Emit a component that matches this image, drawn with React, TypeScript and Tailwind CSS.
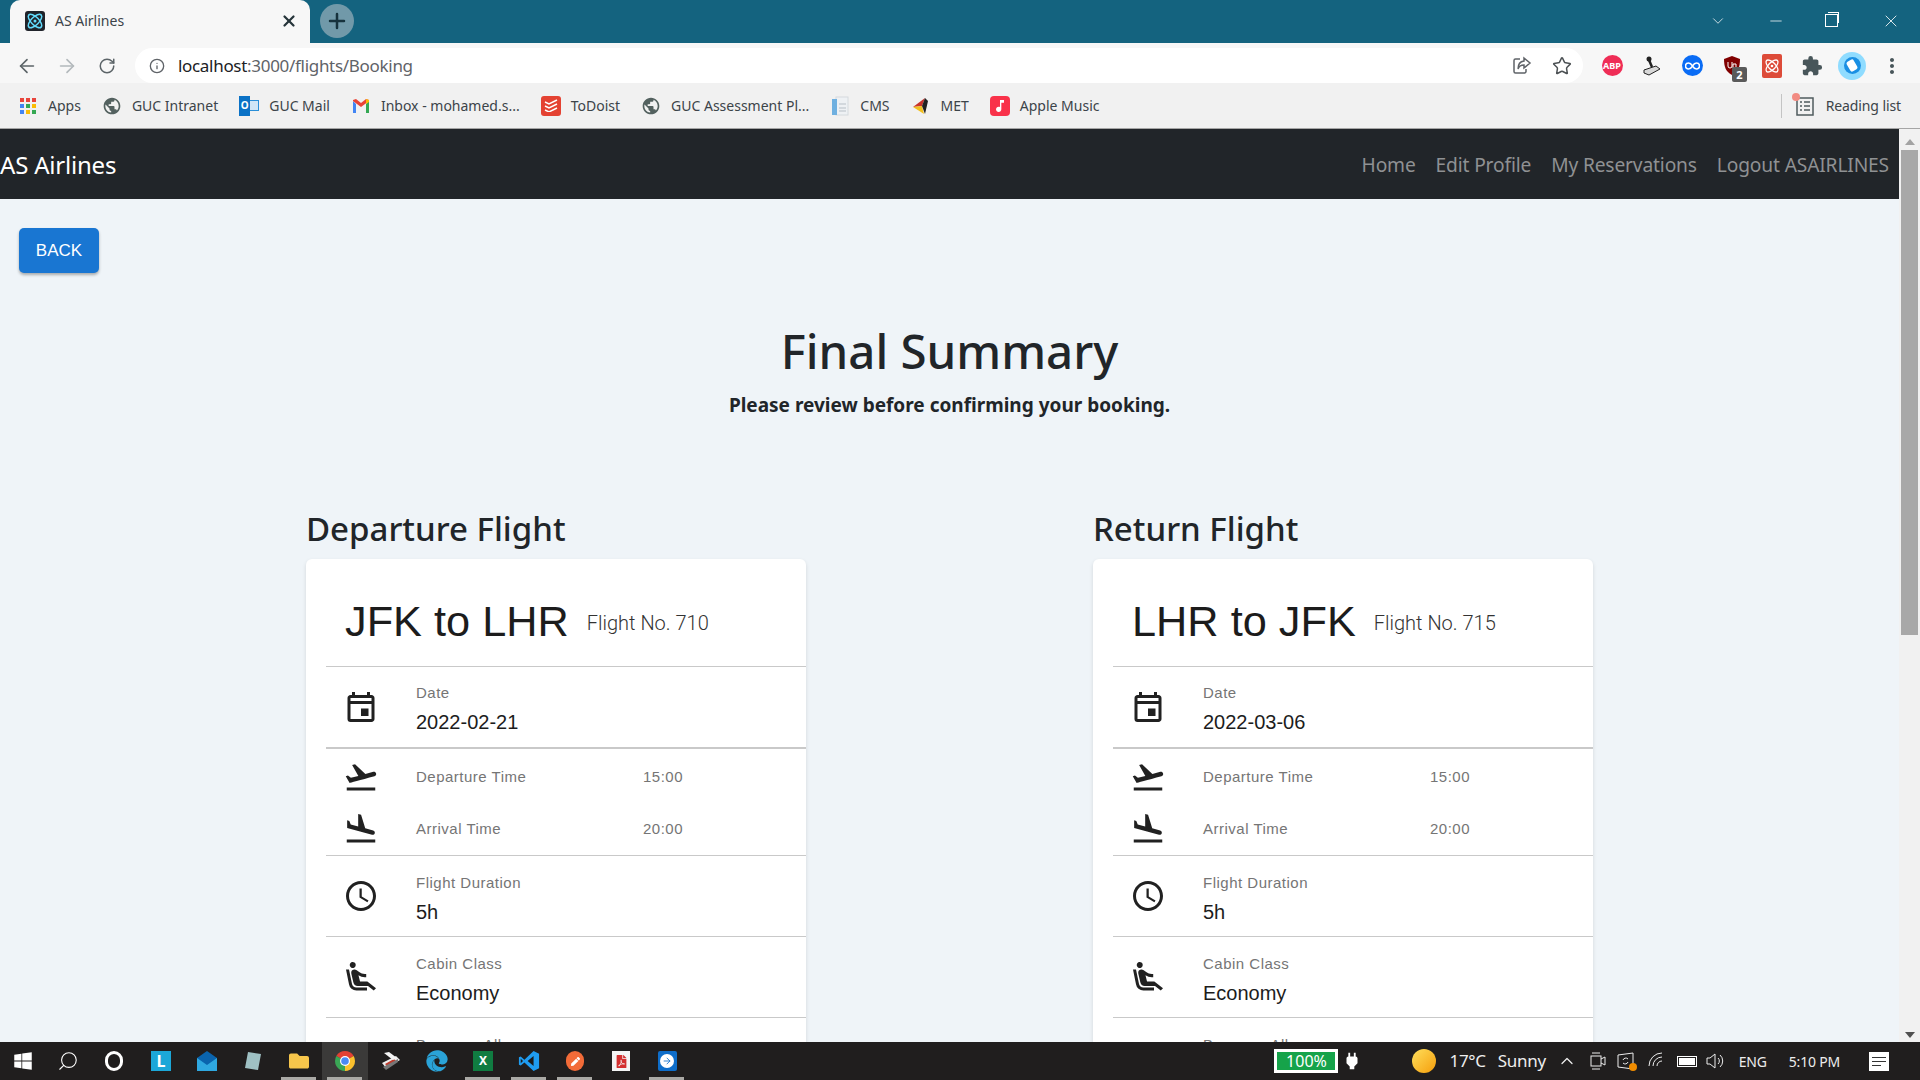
import React from 'react';
import { ArrowLeft, ArrowRight, RotateCw, Info, Star, Atom, Plus, X, ChevronDown, Minus, ChevronUp, Search } from 'lucide-react';
import {
  MdOutlineEvent,
  MdFlightTakeoff,
  MdFlightLand,
  MdAccessTime,
  MdAirlineSeatReclineExtra,
  MdExtension,
  MdPublic,
  MdMoreVert,
  MdPower,
  MdMusicNote,
} from 'react-icons/md';
import { FaWindows, FaEdge, FaFolder, FaPen, FaFilePdf } from 'react-icons/fa';

const segoe = "font-['Noto_Sans',sans-serif]";
const arial = "font-['Liberation_Sans',Arial,sans-serif]";

const appColors = ['bg-[#e8453c]', 'bg-[#e8453c]', 'bg-[#e8453c]', 'bg-[#4285f4]', 'bg-[#34a853]', 'bg-[#fbbc05]', 'bg-[#4285f4]', 'bg-[#fbbc05]', 'bg-[#34a853]'];

function AppsIcon() {
  return (
    <div className="grid grid-cols-3 gap-[2px] w-[16px] h-[16px]">
      {appColors.map((c, i) => (
        <span key={i} className={`${c} w-[4px] h-[4px]`} />
      ))}
    </div>
  );
}

function GmailIcon() {
  return (
    <svg width="18" height="16" viewBox="0 0 18 16">
      <path d="M1 3v12h3V6z" fill="#4285f4" />
      <path d="M17 3v12h-3V6z" fill="#34a853" />
      <path d="M1 3l8 6 8-6v-1L14 1 9 5 4 1 1 2z" fill="#ea4335" />
      <path d="M14 1l3 1v2l-3 2z" fill="#fbbc05" />
    </svg>
  );
}

function TodoistIcon() {
  return (
    <div className="w-[20px] h-[20px] rounded-[3px] bg-[#e44232] flex items-center justify-center">
      <svg width="14" height="13" viewBox="0 0 14 13" fill="none" stroke="#fff" strokeWidth="1.4">
        <path d="M1 3l4 2 8-4M1 7l4 2 8-4M1 11l4 2 8-4" />
      </svg>
    </div>
  );
}

function OutlookIcon() {
  return (
    <div className="relative w-[20px] h-[20px]">
      <div className="absolute right-0 top-[4px] w-[13px] h-[11px] bg-[#cfe6f7] border border-[#2a8fd8]" />
      <div className="absolute left-0 top-0 w-[11px] h-[20px] bg-[#0b72c6] text-white text-[10px] font-bold flex items-center justify-center">O</div>
    </div>
  );
}

function CmsIcon() {
  return (
    <svg width="18" height="20" viewBox="0 0 18 20">
      <rect x="5" y="1" width="12" height="18" fill="#eef1f4" stroke="#d5dade" />
      <rect x="1" y="3" width="5" height="16" fill="#6fb0e0" />
      <path d="M8 8h7M8 12h7M8 15h7" stroke="#b7bfc6" />
    </svg>
  );
}

function ReadingIcon() {
  return (
    <svg width="18" height="20" viewBox="0 0 18 20" fill="none" stroke="#4f5b5d" strokeWidth="1.5">
      <rect x="1" y="2" width="16" height="17" />
      <path d="M4 6h2M4 10h2M4 14h2M8 6h6M8 10h6M8 14h6" />
    </svg>
  );
}

function ChromeIcon() {
  return (
    <svg width="24" height="24" viewBox="0 0 24 24">
      <path d="M12 12L3.34 7A10 10 0 0 1 20.66 7Z" fill="#e34133" />
      <path d="M12 12L20.66 7A10 10 0 0 1 12 22Z" fill="#fbc02d" />
      <path d="M12 12L12 22A10 10 0 0 1 3.34 7Z" fill="#3aa655" />
      <circle cx="12" cy="12" r="5" fill="#fff" />
      <circle cx="12" cy="12" r="3.8" fill="#4a8af4" />
    </svg>
  );
}

function VsCodeIcon() {
  return (
    <svg width="22" height="26" viewBox="0 0 24 24">
      <path d="M17 1l6 3v16l-6 3L7 13.5 3 17l-2-1V8l2-1 4 3.5z" fill="#1f9cf0" />
      <path d="M17 6.5L10.5 12l6.5 5.5z" fill="#1b1b1b" />
      <path d="M3 9.5L5.500 12 3 14.500z" fill="#1b1b1b" />
    </svg>
  );
}

function ShareIcon() {
  return (
    <svg width="20" height="20" viewBox="0 0 20 20" fill="none" stroke="#5f6368" strokeWidth="1.5">
      <path d="M8 3H3.500A1.500 1.500 0 0 0 2 4.500v11A1.500 1.500 0 0 0 3.500 17h9a1.500 1.500 0 0 0 1.500-1.500V13" />
      <path d="M12 2l6 5-6 5V9c-3 0-5 1-6 4 0-5 2-7.500 6-8z" />
    </svg>
  );
}

function Bookmark({ icon, label }: { icon: React.ReactNode; label: string }) {
  return (
    <div className="flex items-center gap-[10px]">
      <div className="w-[20px] h-[20px] flex items-center justify-center">{icon}</div>
      <span className="text-[14px] text-[#3c4449] whitespace-nowrap">{label}</span>
    </div>
  );
}

function ExtIcon({ children }: { children: React.ReactNode }) {
  return <div className="relative w-[40px] h-[35px] flex items-center justify-center">{children}</div>;
}

function InfoRow({ icon, label, value }: { icon: React.ReactNode; label: string; value: string }) {
  return (
    <div className="ml-[20px] h-[81px] border-b border-[#c9c9c9] flex items-center">
      <div className="w-[36px] ml-[17px] mr-[37px] flex justify-center text-[#212121]">{icon}</div>
      <div className="flex flex-col pt-[6px]">
        <span className="text-[15px] leading-[20px] tracking-[0.5px] text-[#757575]">{label}</span>
        <span className="text-[20px] leading-[28px] mt-[5px] text-[#1c1c1c]">{value}</span>
      </div>
    </div>
  );
}

function TimeRow({ icon, label, value }: { icon: React.ReactNode; label: string; value: string }) {
  return (
    <div className="h-[52px] flex items-center">
      <div className="w-[36px] ml-[17px] mr-[37px] flex justify-center text-[#212121]">{icon}</div>
      <span className="w-[227px] text-[15px] tracking-[0.5px] text-[#757575]">{label}</span>
      <span className="text-[15px] tracking-[0.5px] text-[#757575]">{value}</span>
    </div>
  );
}

function FlightCard({ title, from, to, number, date }: { title: string; from: string; to: string; number: string; date: string }) {
  return (
    <div className="w-[500px] shrink-0">
      <h2 className={`${segoe} text-[33px] leading-[42px] font-medium text-[#212529] mb-[9px]`}>{title}</h2>
      <div className={`${arial} bg-white rounded-[6px] shadow-[0_2px_4px_rgba(0,0,0,0.12)]`}>
        <div className="ml-[20px] h-[108px] border-b border-[#c9c9c9] flex items-center pl-[19px] pt-[17px]">
          <span className="text-[43.300px] text-[#1c1c1c]">
            {from} to {to}
          </span>
          <span className="ml-[18px] mt-[4px] text-[20px] text-[#333333] font-['Roboto',sans-serif] font-light">Flight No. {number}</span>
        </div>
        <div className="ml-[20px] h-[82px] border-b-2 border-[#c9c9c9] flex items-center">
          <div className="w-[36px] ml-[17px] mr-[37px] flex justify-center text-[#212121]">
            <MdOutlineEvent size={36} />
          </div>
          <div className="flex flex-col pt-[5px]">
            <span className="text-[15px] leading-[20px] tracking-[0.5px] text-[#757575]">Date</span>
            <span className="text-[20px] leading-[28px] mt-[5px] text-[#1c1c1c]">{date}</span>
          </div>
        </div>
        <div className="ml-[20px] h-[107px] pt-[2px] border-b border-[#c9c9c9]">
          <TimeRow icon={<MdFlightTakeoff size={36} />} label="Departure Time" value="15:00" />
          <TimeRow icon={<MdFlightLand size={36} />} label="Arrival Time" value="20:00" />
        </div>
        <InfoRow icon={<MdAccessTime size={36} />} label="Flight Duration" value="5h" />
        <InfoRow icon={<MdAirlineSeatReclineExtra size={36} />} label="Cabin Class" value="Economy" />
        <InfoRow icon={<MdPublic size={36} />} label="Baggage Allowance" value="2 Bags" />
      </div>
    </div>
  );
}

function TaskItem({ children, active, open }: { children: React.ReactNode; active?: boolean; open?: boolean }) {
  return (
    <div className={`relative w-[46px] h-full flex items-center justify-center ${active ? 'bg-[#3b3a39]' : ''}`}>
      {children}
      {open && <span className="absolute bottom-0 left-[5px] right-[6px] h-[3px] bg-[#aaa9a5]" />}
    </div>
  );
}

export default function App() {
  return (
    <div className={`${segoe} h-screen w-[1920px] flex flex-col overflow-hidden bg-[#eff4f8]`}>
      {/* Tabs */}
      <div className="h-[43px] shrink-0 bg-[#14637f] flex items-end">
        <div className="ml-[10px] w-[300px] h-[43px] bg-[#f7f7f7] rounded-t-[10px] flex items-center pl-[15px] pr-[12px] pb-[2px]">
          <div className="w-[20px] h-[20px] rounded-[3px] bg-[#20232a] flex items-center justify-center">
            <Atom size={18} color="#61dafb" />
          </div>
          <span className="ml-[10px] text-[14px] text-[#3c4449]">AS Airlines</span>
          <X size={18} strokeWidth={3} className="ml-auto text-[#26343a]" />
        </div>
        <div className="ml-[10px] mb-[5px] w-[34px] h-[34px] rounded-full bg-[#7199a9] flex items-center justify-center">
          <Plus size={24} strokeWidth={2.5} className="text-[#17323d]" />
        </div>
        <div className="ml-auto h-full flex items-center text-white pb-[2px]">
          <ChevronDown size={18} strokeWidth={1} className="mr-[40px]" />
          <Minus size={18} strokeWidth={1} className="mr-[40px]" />
          <div className="relative w-[13px] h-[13px] border border-white mr-[43px] before:absolute before:left-[2px] before:-top-[3px] before:w-[11px] before:h-[11px] before:border-t before:border-r before:border-white" />
          <X size={20} strokeWidth={1} className="mr-[19px]" />
        </div>
      </div>

      {/* Toolbar */}
      <div className="h-[40px] shrink-0 bg-[#f7f7f7] flex items-end pl-[7px] pr-[8px]">
        <div className="w-[128px] h-[35px] flex items-center text-[#5c6468]">
          <div className="w-[40px] flex justify-center">
            <ArrowLeft size={22} strokeWidth={1.8} />
          </div>
          <div className="w-[40px] flex justify-center text-[#b3b9bc]">
            <ArrowRight size={22} strokeWidth={1.8} />
          </div>
          <div className="w-[40px] flex justify-center">
            <RotateCw size={18} strokeWidth={2} />
          </div>
        </div>
        <div className="w-[1449px] h-[35px] rounded-full bg-white flex items-center pl-[14px]">
          <Info size={16} strokeWidth={2} className="text-[#5f6368]" />
          <span className="ml-[13px] text-[17px] tracking-[-0.3px] text-[#5f6368]">
            <span className="text-[#202124]">localhost</span>:3000/flights/Booking
          </span>
          <div className="ml-auto mr-[11px] flex items-center gap-[20px]">
            <ShareIcon />
            <Star size={20} strokeWidth={1.8} className="text-[#4c5154]" />
          </div>
        </div>
        <div className="ml-[9px] flex items-center">
          <ExtIcon>
            <div className="w-[21px] h-[21px] rounded-full bg-[#ef2d56] flex items-center justify-center text-white text-[9px] font-bold">ABP</div>
          </ExtIcon>
          <ExtIcon>
            <svg width="20" height="22" viewBox="0 0 20 22">
              <path d="M2 15l12-4 4 3-11 6-5-2z" fill="#d8d8d8" stroke="#222" />
              <path d="M10 12L7 5" stroke="#222" strokeWidth="2.5" />
              <circle cx="7" cy="4" r="2.500" fill="#222" />
            </svg>
          </ExtIcon>
          <ExtIcon>
            <div className="w-[21px] h-[21px] rounded-full bg-[#0a6cf5] flex items-center justify-center">
              <svg width="15" height="8" viewBox="0 0 15 8" fill="none" stroke="#fff" strokeWidth="1.5">
                <path d="M7.500 4C6 1.500 4.500 1 3.500 1a3 3 0 0 0 0 6c1 0 2.500-.5 4-3s3-3 4-3a3 3 0 0 1 0 6c-1 0-2.500-.5-4-3z" />
              </svg>
            </div>
          </ExtIcon>
          <ExtIcon>
            <svg width="20" height="22" viewBox="0 0 20 22">
              <path d="M10 1l8 3c0 8-2 13-8 16C4 17 2 12 2 4z" fill="#800000" />
              <path d="M6 7v4a2 2 0 0 0 4 0V7M11 9h3v4h-3z" fill="none" stroke="#fff" />
            </svg>
            <span className="absolute left-[20px] top-[19px] w-[15px] h-[15px] bg-[#5a5a5a] rounded-[2px] text-white text-[11px] leading-[15px] text-center font-bold">2</span>
          </ExtIcon>
          <ExtIcon>
            <div className="w-[20px] h-[24px] rounded-[2px] bg-[#dd4b39] flex items-center justify-center">
              <Atom size={16} color="#fff" />
            </div>
          </ExtIcon>
          <ExtIcon>
            <MdExtension size={22} className="text-[#48565a]" />
          </ExtIcon>
          <ExtIcon>
            <div className="w-[28px] h-[28px] rounded-full bg-[#8fdcff] flex items-center justify-center">
              <div className="w-[17px] h-[17px] rounded-full bg-[#1a8fe3] flex items-center justify-center">
                <div className="w-[8px] h-[11px] bg-white rotate-[-30deg] rounded-[2px]" />
              </div>
            </div>
          </ExtIcon>
          <ExtIcon>
            <MdMoreVert size={24} className="text-[#48565a]" />
          </ExtIcon>
        </div>
      </div>

      {/* Bookmarks */}
      <div className="h-[46px] shrink-0 bg-[#f1f1f1] border-b border-[#a5a5a5] flex items-center pl-[18px] pr-[19px] gap-[21px]">
        <Bookmark icon={<AppsIcon />} label="Apps" />
        <Bookmark icon={<MdPublic size={20} className="text-[#53615f]" />} label="GUC Intranet" />
        <Bookmark icon={<OutlookIcon />} label="GUC Mail" />
        <Bookmark icon={<GmailIcon />} label="Inbox - mohamed.s..." />
        <Bookmark icon={<TodoistIcon />} label="ToDoist" />
        <Bookmark icon={<MdPublic size={20} className="text-[#53615f]" />} label="GUC Assessment Pl..." />
        <Bookmark icon={<CmsIcon />} label="CMS" />
        <Bookmark
          icon={
            <svg width="20" height="20" viewBox="0 0 20 20">
              <path d="M2 11L14 2l-3 8z" fill="#c9342c" />
              <path d="M2 11l9-1 2 8z" fill="#f2bf1d" />
              <path d="M14 2l3 3-3 13-3-8z" fill="#222" />
            </svg>
          }
          label="MET"
        />
        <Bookmark
          icon={
            <div className="w-[20px] h-[20px] rounded-[4px] bg-[#f9324a] flex items-center justify-center">
              <MdMusicNote size={16} color="#fff" />
            </div>
          }
          label="Apple Music"
        />
        <div className="ml-auto flex items-center">
          <div className="w-px h-[24px] bg-[#c4c4c4] mr-[14px]" />
          <div className="relative mr-[12px]">
            <ReadingIcon />
            <span className="absolute -left-[4px] -top-[3px] w-[8px] h-[8px] rounded-full bg-[#f28b82]" />
          </div>
          <span className="text-[14px] text-[#3c4449] tracking-[-0.1px]">Reading list</span>
        </div>
      </div>

      {/* Page */}
      <div className="flex-1 min-h-0 flex">
        <div className="flex-1 min-w-0 overflow-hidden">
          <nav className="h-[70px] bg-[#212529] flex items-center justify-between pr-[10px] pt-[2px]">
            <span className="text-[24px] text-white tracking-[-0.2px]">AS Airlines</span>
            <div className="flex gap-[20px] text-[19.200px] text-[#8f9193] tracking-[-0.15px]">
              <span>Home</span>
              <span>Edit Profile</span>
              <span>My Reservations</span>
              <span>Logout ASAIRLINES</span>
            </div>
          </nav>
          <div className="pt-[29px]">
            <button className={`${arial} ml-[19px] w-[80px] h-[45px] rounded-[5px] bg-[#1976d2] text-white text-[17px] shadow-[0_2px_3px_rgba(0,0,0,0.3)]`}>
              BACK
            </button>
            <h1 className="mt-[49px] text-center text-[47.400px] leading-[58px] font-medium text-[#212529]">Final Summary</h1>
            <p className="mt-[12px] text-center text-[19px] leading-[27px] font-bold text-[#212529]">Please review before confirming your booking.</p>
            <div className="mt-[89px] pl-[306px] flex gap-[287px]">
              <FlightCard title="Departure Flight" from="JFK" to="LHR" number="710" date="2022-02-21" />
              <FlightCard title="Return Flight" from="LHR" to="JFK" number="715" date="2022-03-06" />
            </div>
          </div>
        </div>
        {/* Scrollbar */}
        <div className="w-[21px] shrink-0 bg-[#f1f1f1] flex flex-col items-center">
          <svg width="10" height="6" viewBox="0 0 10 6" className="mt-[10px]">
            <path d="M5 0l5 6H0z" fill="#a3a3a3" />
          </svg>
          <div className="mt-[5px] w-[17px] h-[485px] bg-[#a8a8a8]" />
          <svg width="10" height="6" viewBox="0 0 10 6" className="mt-auto mb-[4px]">
            <path d="M0 0h10L5 6z" fill="#505050" />
          </svg>
        </div>
      </div>

      {/* Taskbar */}
      <div className="h-[38px] shrink-0 bg-[#201e1e] flex items-center text-white">
        <TaskItem>
          <FaWindows size={20} />
        </TaskItem>
        <TaskItem>
          <Search size={22} strokeWidth={1.2} className="-scale-x-100 -ml-[2px]" />
        </TaskItem>
        <TaskItem>
          <div className="w-[18px] h-[20px] rounded-full border-[3px] border-white -ml-[3px]" />
        </TaskItem>
        <TaskItem>
          <div className="w-[20px] h-[20px] bg-[#1ca7d8] flex items-center justify-center text-white text-[16px] font-bold leading-none">L</div>
        </TaskItem>
        <TaskItem>
          <svg width="20" height="20" viewBox="0 0 20 20">
            <path d="M0 7l10-7 10 7v13H0z" fill="#0a64ad" />
            <path d="M0 7l10 7 10-7v13H0z" fill="#2fa8e0" />
          </svg>
        </TaskItem>
        <TaskItem>
          <svg width="20" height="20" viewBox="0 0 20 20">
            <path d="M5 1l13 2-3 16-13-2z" fill="#9fc1c4" />
          </svg>
        </TaskItem>
        <TaskItem open>
          <FaFolder size={20} className="text-[#f7c64b]" />
        </TaskItem>
        <TaskItem active open>
          <ChromeIcon />
        </TaskItem>
        <TaskItem>
          <svg width="22" height="22" viewBox="0 0 22 22">
            <path d="M2 13L16 6l4 4-14 8z" fill="#ededed" />
            <path d="M5 14l9-5 2 2-9 5z" fill="#c0392b" />
            <path d="M4 3l5-1 8 6-4 2z" fill="#f5f5f5" />
            <path d="M3 17l15-8v3L6 20z" fill="#777" />
          </svg>
        </TaskItem>
        <TaskItem>
          <FaEdge size={22} className="text-[#2aa3d8]" />
        </TaskItem>
        <TaskItem open>
          <div className="w-[20px] h-[20px] bg-[#107c41] text-white text-[12px] font-bold flex items-center justify-center">X</div>
        </TaskItem>
        <TaskItem open>
          <VsCodeIcon />
        </TaskItem>
        <TaskItem open>
          <div className="w-[18px] h-[20px] rounded-full bg-[#f26b38] flex items-center justify-center">
            <FaPen size={9} color="#fff" />
          </div>
        </TaskItem>
        <TaskItem>
          <div className="w-[18px] h-[20px] bg-[#f4f4f4] flex items-center justify-center">
            <FaFilePdf size={13} className="text-[#d32f2f]" />
          </div>
        </TaskItem>
        <TaskItem open>
          <div className="w-[19px] h-[20px] rounded-[2px] bg-[#0e6dc9] flex items-center justify-center">
            <div className="w-[14px] h-[14px] rounded-full bg-white flex items-center justify-center">
              <ArrowRight size={10} className="text-[#0e6dc9]" />
            </div>
          </div>
        </TaskItem>

        {/* Tray */}
        <div className="ml-auto flex items-center h-full">
          <div className="w-[64px] h-[24px] border-[3px] border-white bg-[#16a34a] text-[16px] leading-[18px] text-center">100%</div>
          <MdPower size={22} className="ml-[3px]" />
          <div className="ml-[49px] w-[24px] h-[24px] rounded-full bg-[linear-gradient(135deg,#ffdf5c,#f59e0b)]" />
          <span className="ml-[13px] text-[17px] tracking-[-0.3px] text-[#ededed]">17°C</span>
          <span className="ml-[12px] text-[17px] tracking-[-0.3px] text-[#ededed]">Sunny</span>
          <ChevronUp size={20} strokeWidth={1.5} className="ml-[11px] text-[#ededed]" />
          <svg width="16" height="20" viewBox="0 0 16 20" fill="none" stroke="#ededed" className="ml-[13px]">
            <rect x="1" y="5" width="10" height="10" />
            <path d="M11 8l4-2v8l-4-2M2 2h8M2 18h8" />
          </svg>
          <svg width="20" height="20" viewBox="0 0 20 20" fill="none" stroke="#ededed" className="relative ml-[11px]">
            <path d="M1 4l15-2v16L1 16z" />
            <path d="M6 9a3 3 0 0 1 5-1M11 11a3 3 0 0 1-5 1" />
            <circle cx="16" cy="16" r="4" fill="#f08c00" stroke="none" />
          </svg>
          <svg width="18" height="18" viewBox="0 0 18 18" fill="none" stroke="#ededed" className="ml-[11px]">
            <path d="M1 14A13 13 0 0 1 14 1M5 14a9 9 0 0 1 9-9M9 14a5 5 0 0 1 5-5" />
          </svg>
          <div className="ml-[11px] w-[20px] h-[11px] border border-white p-[1px]">
            <div className="w-full h-full bg-white" />
          </div>
          <svg width="20" height="18" viewBox="0 0 20 18" fill="none" stroke="#ededed" className="ml-[9px]">
            <path d="M1 6h3l5-4v14l-5-4H1zM12 6a4 4 0 0 1 0 6M14 3a8 8 0 0 1 0 12" />
          </svg>
          <span className="ml-[13px] text-[14px] text-[#ededed] tracking-[-0.2px]">ENG</span>
          <span className="ml-[22px] text-[14px] text-[#ededed] tracking-[-0.2px]">5:10 PM</span>
          <div className="ml-[29px] mr-[31px] w-[20px] h-[19px] bg-white flex flex-col justify-center gap-[3px] px-[3px]">
            <span className="h-px bg-[#333]" />
            <span className="h-px bg-[#333]" />
            <span className="h-px w-[9px] bg-[#333]" />
          </div>
        </div>
      </div>
    </div>
  );
}
